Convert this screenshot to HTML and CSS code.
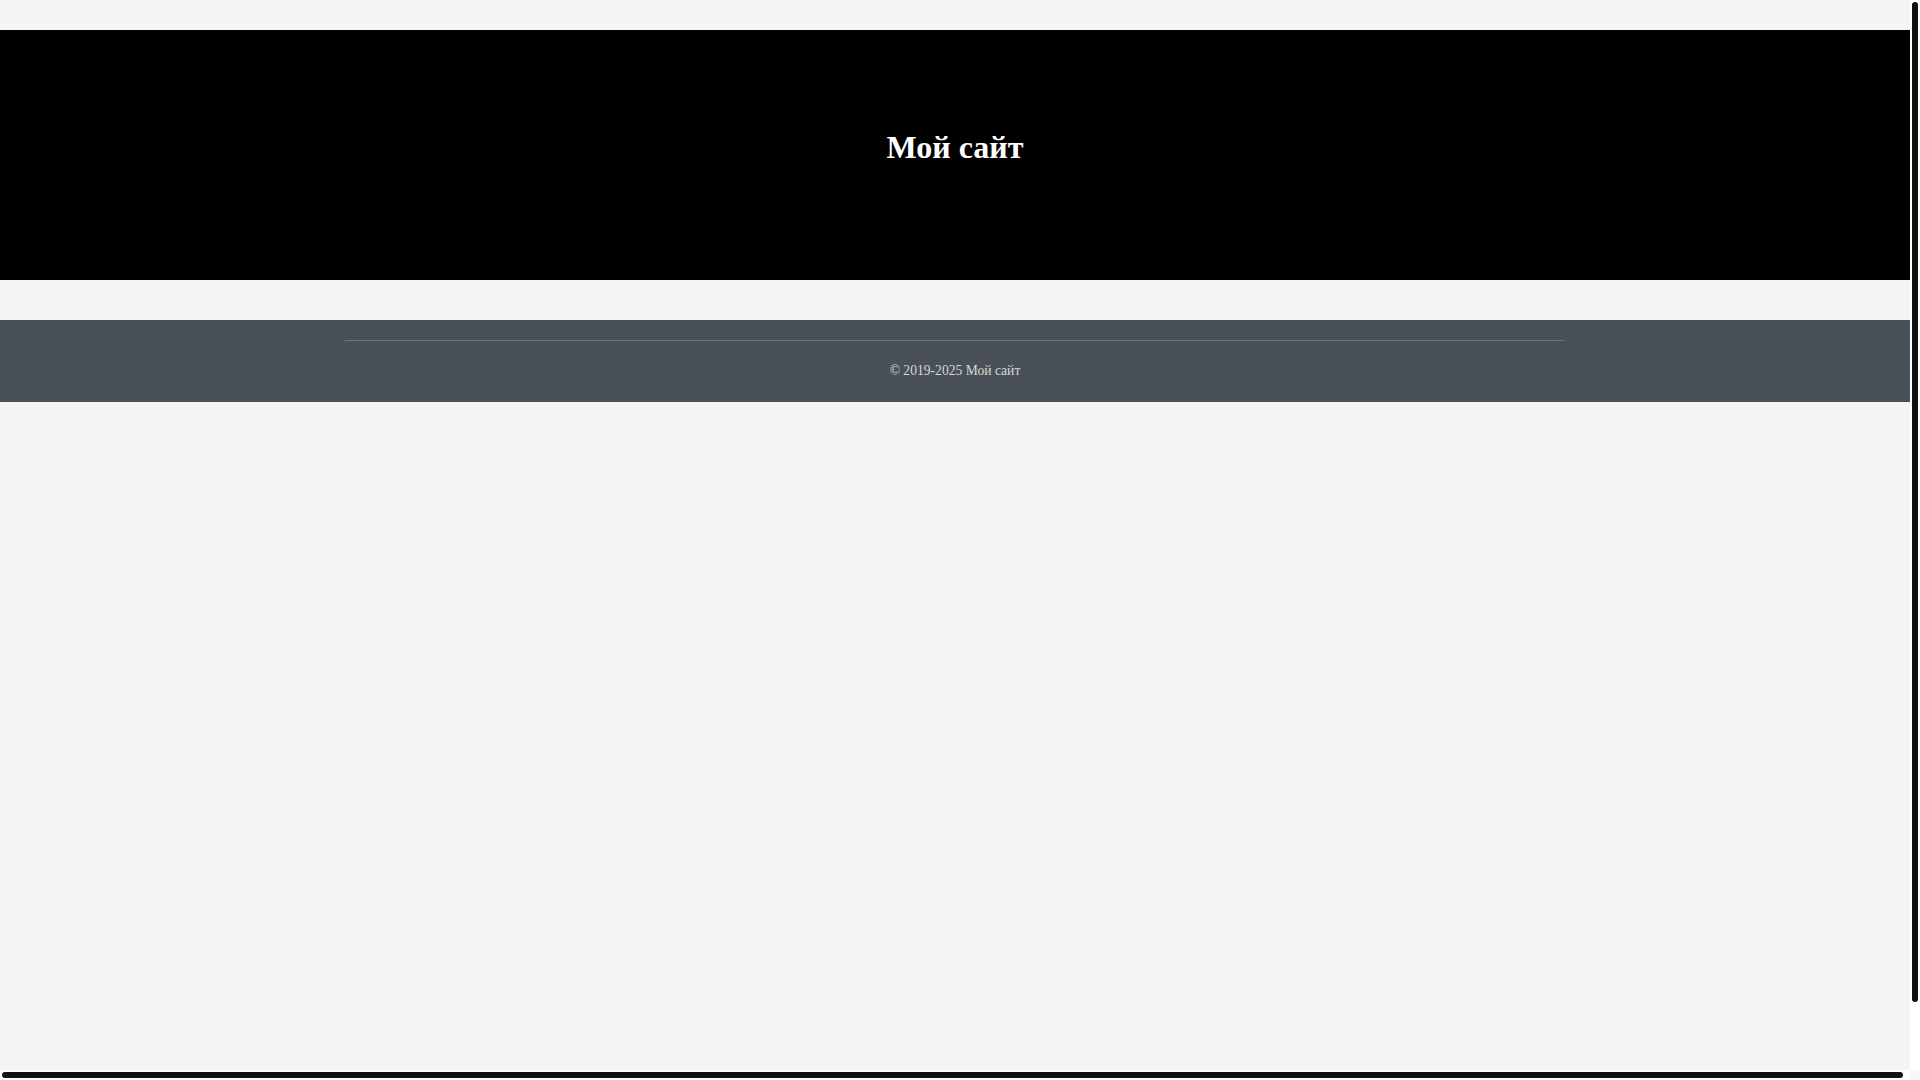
FILE: index.html
```html
<!DOCTYPE html>
<html lang="ru">
<head>
<meta charset="utf-8">
<title>Мой сайт</title>
<link rel="stylesheet" href="styles.css">
</head>
<body>
<div class="frame">
  <div class="viewport">
    <header class="site-header">
      <h1 class="site-title">Мой сайт</h1>
    </header>
    <main class="site-content"></main>
    <footer class="site-footer">
      <div class="footer-container">
        <p class="copyright">© 2019-2025 Мой сайт</p>
      </div>
    </footer>
  </div>
  <div class="scroll-track scroll-track-v"><div class="scroll-thumb scroll-thumb-v"></div></div>
  <div class="scroll-track scroll-track-h"><div class="scroll-thumb scroll-thumb-h"></div></div>
  <div class="scroll-corner"></div>
</div>
</body>
</html>
```
FILE: styles.css
```css
html {
  background: #f5f5f5;
}
body {
  margin: 0;
  height: 100vh;
  overflow: hidden;
  background: #f5f5f5;
  font-family: "Liberation Serif", "Times New Roman", serif;
}
.frame {
  display: grid;
  grid-template-columns: 1fr 10px;
  grid-template-rows: 1fr 10px;
  height: 100vh;
}
.viewport {
  overflow: hidden;
  padding-top: 30px;
  background: #f5f5f5;
}
.scroll-track {
  background: #ffffff;
  display: flex;
}
.scroll-track-v {
  padding: 2px 2px 0;
}
.scroll-track-h {
  padding: 2px 0 0 2px;
}
.scroll-thumb {
  background: #111111;
  border-radius: 3px;
}
.scroll-thumb-v {
  width: 6px;
  height: 1000px;
}
.scroll-thumb-h {
  width: 1901px;
  height: 6px;
}
.scroll-corner {
  background: #f7f7f7;
}
.site-header {
  height: 250px;
  box-sizing: border-box;
  padding-top: 99px;
  background: #000000;
  text-align: center;
}
.site-title {
  margin: 0;
  font-size: 32px;
  line-height: 37px;
  font-weight: bold;
  color: #ffffff;
}
.site-content {
  display: block;
  height: 40px;
}
.site-footer {
  background: #495057;
  padding-top: 20px;
}
.footer-container {
  width: 1220px;
  margin: 0 auto;
  border-top: 1px solid #6c737b;
}
.copyright {
  margin: 0;
  padding: 22px 0 23px;
  font-size: 13.6px;
  line-height: 16px;
  text-align: center;
  color: #d6d8db;
}
```
